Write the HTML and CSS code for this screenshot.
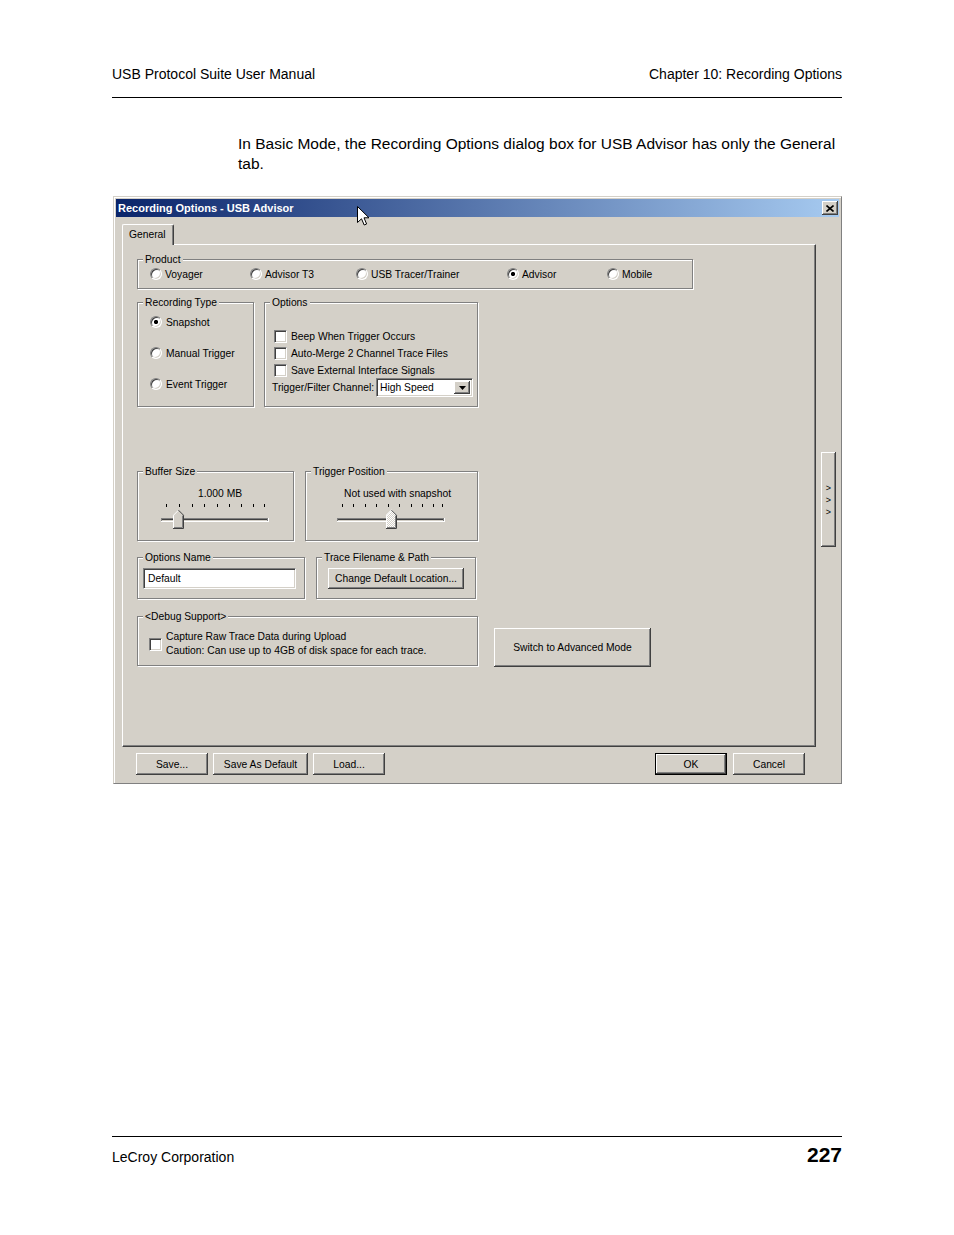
FILE: index.html
```html
<!DOCTYPE html>
<html lang="en">
<head>
  <meta charset="UTF-8">
  <title>Recording Options - USB Advisor</title>
  <link rel="stylesheet" href="styles.css">
</head>
<body>
<div class="page">
  <header class="page-head">
    <span>USB Protocol Suite User Manual</span>
    <span>Chapter 10: Recording Options</span>
  </header>

  <p class="intro">In Basic Mode, the Recording Options dialog box for USB Advisor has only the General tab.</p>

  <div class="dlg">
    <div class="title">
      <span>Recording Options - USB Advisor</span>
      <span class="close"><svg width="8" height="7" viewBox="0 0 8 7"><path d="M0.5 0.5 L7.5 6.5 M7.5 0.5 L0.5 6.5" stroke="#000" stroke-width="1.6"/></svg></span>
    </div>

    <div class="dlg-main">
      <div class="tabs">
        <div class="tab-strip"><div class="tab">General</div></div>
        <div class="panel">

          <div class="grp grp-product">
            <div class="grp-label">Product</div>
            <div class="product-row">
              <div class="opt"><span class="radio"></span>Voyager</div>
              <div class="opt"><span class="radio"></span>Advisor T3</div>
              <div class="opt"><span class="radio"></span>USB Tracer/Trainer</div>
              <div class="opt"><span class="radio on"></span>Advisor</div>
              <div class="opt"><span class="radio"></span>Mobile</div>
            </div>
          </div>

          <div class="row row-type">
            <div class="grp grp-rtype">
              <div class="grp-label">Recording Type</div>
              <div class="rtype-list">
                <div class="opt"><span class="radio on"></span>Snapshot</div>
                <div class="opt"><span class="radio"></span>Manual Trigger</div>
                <div class="opt"><span class="radio"></span>Event Trigger</div>
              </div>
            </div>
            <div class="grp grp-options">
              <div class="grp-label">Options</div>
              <div class="check-list">
                <div class="opt"><span class="check"></span>Beep When Trigger Occurs</div>
                <div class="opt"><span class="check"></span>Auto-Merge 2 Channel Trace Files</div>
                <div class="opt"><span class="check"></span>Save External Interface Signals</div>
              </div>
              <div class="channel">
                <span class="channel-label">Trigger/Filter Channel:</span>
                <div class="select sunken">
                  <span>High Speed</span>
                  <span class="select-btn"><svg width="7" height="4" viewBox="0 0 7 4"><path d="M0 0 H7 L3.5 4 Z" fill="#000"/></svg></span>
                </div>
              </div>
            </div>
          </div>

          <div class="row row-slide">
            <div class="grp grp-buf">
              <div class="grp-label">Buffer Size</div>
              <div class="slide-text buf-text">1.000 MB</div>
              <svg class="slider buf-slider" width="114" height="30" viewBox="0 0 114 30">
                <g fill="#000">
                  <rect x="8" y="4" width="1" height="3"/><rect x="21" y="4" width="1" height="3"/>
                  <rect x="34" y="4" width="1" height="3"/><rect x="46" y="4" width="1" height="3"/>
                  <rect x="59" y="4" width="1" height="3"/><rect x="71" y="4" width="1" height="3"/>
                  <rect x="83" y="4" width="1" height="3"/><rect x="95" y="4" width="1" height="3"/>
                  <rect x="106" y="4" width="1" height="3"/>
                </g>
                <rect x="3" y="18" width="108" height="4" fill="#fff"/>
                <rect x="3" y="18" width="107" height="3" fill="#808080"/>
                <rect x="4" y="19" width="105" height="1" fill="#404040"/>
                <rect x="4" y="20" width="105" height="1" fill="#d4d0c8"/>
                <polygon points="15,15 20.5,9.5 26,15 26,29 15,29" fill="#d4d0c8"/>
                <polyline points="15.5,28 15.5,15.2 20.5,10.2" fill="none" stroke="#fff"/>
                <polyline points="20.5,10.2 25.5,15.2 25.5,28.5 15,28.5" fill="none" stroke="#404040"/>
                <polyline points="24.5,15.6 24.5,27.5 16,27.5" fill="none" stroke="#808080"/>
              </svg>
            </div>
            <div class="grp grp-trig">
              <div class="grp-label">Trigger Position</div>
              <div class="slide-text trig-text">Not used with snapshot</div>
              <svg class="slider trig-slider" width="114" height="30" viewBox="0 0 114 30">
                <defs>
                  <pattern id="hatch" width="2" height="2" patternUnits="userSpaceOnUse">
                    <rect width="2" height="2" fill="#d4d0c8"/>
                    <rect width="1" height="1" fill="#fff"/>
                    <rect x="1" y="1" width="1" height="1" fill="#fff"/>
                  </pattern>
                </defs>
                <g fill="#000">
                  <rect x="8" y="4" width="1" height="3"/><rect x="19" y="4" width="1" height="3"/>
                  <rect x="31" y="4" width="1" height="3"/><rect x="42" y="4" width="1" height="3"/>
                  <rect x="54" y="4" width="1" height="3"/><rect x="65" y="4" width="1" height="3"/>
                  <rect x="77" y="4" width="1" height="3"/><rect x="88" y="4" width="1" height="3"/>
                  <rect x="99" y="4" width="1" height="3"/><rect x="108" y="4" width="1" height="3"/>
                </g>
                <rect x="3" y="18" width="108" height="4" fill="#fff"/>
                <rect x="3" y="18" width="107" height="3" fill="#808080"/>
                <rect x="4" y="19" width="105" height="1" fill="#404040"/>
                <rect x="4" y="20" width="105" height="1" fill="#d4d0c8"/>
                <polygon points="52,15 57.5,9.5 63,15 63,29 52,29" fill="url(#hatch)"/>
                <polyline points="52.5,28 52.5,15.2 57.5,10.2" fill="none" stroke="#fff"/>
                <polyline points="57.5,10.2 62.5,15.2 62.5,28.5 52,28.5" fill="none" stroke="#404040"/>
                <polyline points="61.5,15.6 61.5,27.5 53,27.5" fill="none" stroke="#808080"/>
              </svg>
            </div>
          </div>

          <div class="row row-name">
            <div class="grp grp-name">
              <div class="grp-label">Options Name</div>
              <div class="field sunken">Default</div>
            </div>
            <div class="grp grp-path">
              <div class="grp-label">Trace Filename &amp; Path</div>
              <button class="btn path-btn">Change Default Location...</button>
            </div>
          </div>

          <div class="row row-debug">
            <div class="grp grp-debug">
              <div class="grp-label">&lt;Debug Support&gt;</div>
              <div class="debug-opt">
                <span class="check"></span>
                <div>Capture Raw Trace Data during Upload<br>Caution: Can use up to 4GB of disk space for each trace.</div>
              </div>
            </div>
            <button class="btn switch-btn">Switch to Advanced Mode</button>
          </div>

        </div>
      </div>
      <div class="side-btn"><span>&gt;</span><span>&gt;</span><span>&gt;</span></div>
    </div>

    <div class="btn-row">
      <button class="btn btn-sm">Save...</button>
      <button class="btn btn-wide">Save As Default</button>
      <button class="btn btn-sm">Load...</button>
      <button class="btn btn-sm btn-default">OK</button>
      <button class="btn btn-sm">Cancel</button>
    </div>
  </div>

  <footer class="page-foot">
    <span>LeCroy Corporation</span>
    <span class="page-num">227</span>
  </footer>

  <svg class="cursor" width="13" height="21" viewBox="0 0 13 21">
    <path d="M0.5 0.5 L0.5 16.5 L4.5 12.8 L7.2 19 L9.6 18 L7 11.8 L12 11.8 Z" fill="#fff" stroke="#000" stroke-width="1"/>
  </svg>
</div>
</body>
</html>
```

FILE: styles.css
```css
* { margin: 0; padding: 0; box-sizing: border-box; }
html, body {
  background: #fff;
}
body {
  font-family: "Liberation Sans", Arial, sans-serif;
  color: #000;
}

.page {
  position: relative;
  width: 954px;
  padding: 0 112px;
}

.page-head {
  display: flex;
  justify-content: space-between;
  padding: 66px 0 15px;
  font-size: 14px;
  line-height: 16px;
  border-bottom: 1px solid #000;
}

.intro {
  margin: 36px 0 0 126px;
  font-size: 15.5px;
  line-height: 20px;
}

/* dialog window */
.dlg {
  width: 729px;
  margin: 22px 0 0 1px;
  padding: 2px;
  background: #d4d0c8;
  border: 1px solid;
  border-color: #d4d0c8 #808080 #808080 #d4d0c8;
  box-shadow: inset 1px 1px 0 #fff;
  font-size: 10.3px;
  line-height: 13px;
}

.title {
  display: flex;
  align-items: center;
  justify-content: space-between;
  height: 18px;
  padding: 0 1px 0 2px;
  background: linear-gradient(to right, #0a246a, #a6caf0);
  color: #fff;
  font-weight: bold;
  font-size: 11px;
}

.close {
  display: flex;
  align-items: center;
  justify-content: center;
  width: 16px;
  height: 14px;
  background: #d4d0c8;
  box-shadow: inset -1px -1px #404040, inset 1px 1px #fff, inset -2px -2px #808080;
}

.dlg-main {
  display: flex;
  align-items: flex-start;
  padding: 7px 0 0 6px;
}

.tabs { width: 694px; }

.tab-strip {
  display: flex;
  height: 20px;
}

.tab {
  position: relative;
  z-index: 1;
  width: 52px;
  height: 21px;
  padding: 3px 0 0 6px;
  background: #d4d0c8;
  border-top: 1px solid #fff;
  border-left: 1px solid #fff;
  border-right: 1px solid #404040;
  border-radius: 2px 2px 0 0;
  box-shadow: inset -1px 0 #808080;
}

.panel {
  height: 503px;
  padding: 14px 0 0 14px;
  border: 1px solid;
  border-color: #fff #404040 #404040 #fff;
  box-shadow: inset -1px -1px #808080;
}

.side-btn {
  display: flex;
  flex-direction: column;
  align-items: center;
  justify-content: center;
  width: 15px;
  height: 95px;
  margin: 228px 0 0 5px;
  background: #d4d0c8;
  box-shadow: inset -1px -1px #404040, inset 1px 1px #fff, inset -2px -2px #808080;
  font-size: 9px;
  line-height: 12px;
}

/* group boxes */
.grp {
  border: 1px solid #808080;
  box-shadow: inset 1px 1px #fff, 1px 1px #fff;
}

.grp-label {
  display: table;
  margin: -7px 0 0 5px;
  padding: 0 2px;
  background: #d4d0c8;
}

.row {
  display: flex;
  align-items: flex-start;
}

.opt {
  display: flex;
  align-items: center;
  gap: 3px;
  height: 14px;
  white-space: nowrap;
}

.radio {
  flex: 0 0 12px;
  width: 12px;
  height: 12px;
  border-radius: 50%;
  background: #fff;
  border: 1px solid;
  border-color: #808080 #fff #fff #808080;
  box-shadow: inset 1px 1px #404040, inset -1px -1px #d4d0c8;
}

.radio.on {
  background: radial-gradient(circle, #000 0 1.8px, #fff 2.4px);
}

.check {
  flex: 0 0 13px;
  width: 13px;
  height: 13px;
  background: #fff;
  border: 1px solid;
  border-color: #808080 #fff #fff #808080;
  box-shadow: inset 1px 1px #404040, inset -1px -1px #d4d0c8;
}

.sunken {
  background: #fff;
  border: 1px solid;
  border-color: #808080 #fff #fff #808080;
  box-shadow: inset 1px 1px #404040, inset -1px -1px #d4d0c8;
}

.btn {
  font: inherit;
  color: #000;
  background: #d4d0c8;
  border: none;
  box-shadow: inset -1px -1px #404040, inset 1px 1px #fff, inset -2px -2px #808080;
}

.btn-default {
  box-shadow: inset 0 0 0 1px #000, inset -2px -2px #404040, inset 2px 2px #fff, inset -3px -3px #808080;
}

/* product */
.grp-product {
  width: 556px;
  padding-bottom: 7px;
}

.product-row {
  display: grid;
  grid-template-columns: 100px 106px 151px 100px auto;
  margin-top: 1px;
  padding-left: 12px;
}

/* recording type + options */
.row-type { margin-top: 13px; }

.grp-rtype {
  width: 117px;
  height: 105px;
}

.rtype-list {
  display: flex;
  flex-direction: column;
  gap: 17px;
  margin-top: 6px;
  padding-left: 12px;
}

.rtype-list .opt { gap: 4px; }

.grp-options {
  width: 214px;
  height: 105px;
  margin-left: 10px;
}

.check-list {
  display: flex;
  flex-direction: column;
  gap: 3px;
  margin-top: 20px;
  padding-left: 9px;
}

.check-list .opt { gap: 4px; }

.channel {
  display: flex;
  align-items: center;
  margin: 1px 0 0 7px;
}

.channel-label {
  flex: 0 0 104px;
  white-space: nowrap;
}

.select {
  display: flex;
  width: 97px;
  height: 19px;
  padding: 2px;
}

.select span:first-child {
  flex: 1;
  padding-left: 1px;
  line-height: 14px;
}

.select-btn {
  display: flex;
  align-items: center;
  justify-content: center;
  width: 16px;
  background: #d4d0c8;
  box-shadow: inset -1px -1px #404040, inset 1px 1px #fff, inset -2px -2px #808080;
}

/* sliders */
.row-slide { margin-top: 64px; }

.grp-buf {
  width: 157px;
  height: 70px;
}

.grp-trig {
  width: 173px;
  height: 70px;
  margin-left: 11px;
}

.slide-text {
  margin-top: 9px;
  white-space: nowrap;
}

.buf-text { padding-left: 60px; }
.trig-text { padding-left: 38px; }

.slider { display: block; }
.buf-slider { margin-left: 20px; }
.trig-slider { margin-left: 28px; }

/* options name / path */
.row-name { margin-top: 16px; }

.grp-name {
  width: 168px;
  height: 42px;
}

.field {
  width: 153px;
  height: 21px;
  margin: 4px 0 0 5px;
  padding-left: 4px;
  line-height: 19px;
}

.grp-path {
  width: 160px;
  height: 42px;
  margin-left: 11px;
}

.path-btn {
  display: block;
  width: 136px;
  height: 21px;
  margin: 4px 0 0 11px;
}

/* debug */
.row-debug { margin-top: 17px; }

.grp-debug {
  width: 341px;
  height: 50px;
}

.debug-opt {
  display: flex;
  align-items: center;
  gap: 4px;
  margin-top: 7px;
  padding-left: 11px;
  line-height: 14px;
  white-space: nowrap;
}

.switch-btn {
  width: 157px;
  height: 39px;
  margin: 12px 0 0 16px;
}

/* bottom buttons */
.btn-row {
  display: flex;
  gap: 5px;
  padding: 6px 34px 6px 20px;
}

.btn-sm, .btn-wide { height: 22px; }
.btn-sm { width: 72px; }
.btn-wide { width: 95px; }
.btn-default { margin-left: auto; margin-right: 1px; }

.page-foot {
  display: flex;
  justify-content: space-between;
  align-items: baseline;
  margin-top: 352px;
  padding-top: 7px;
  border-top: 1px solid #000;
  font-size: 14px;
  line-height: 16px;
}

.page-num {
  font-weight: bold;
  font-size: 21px;
  line-height: 22px;
}

.cursor {
  position: absolute;
  left: 357px;
  top: 206px;
}
```
